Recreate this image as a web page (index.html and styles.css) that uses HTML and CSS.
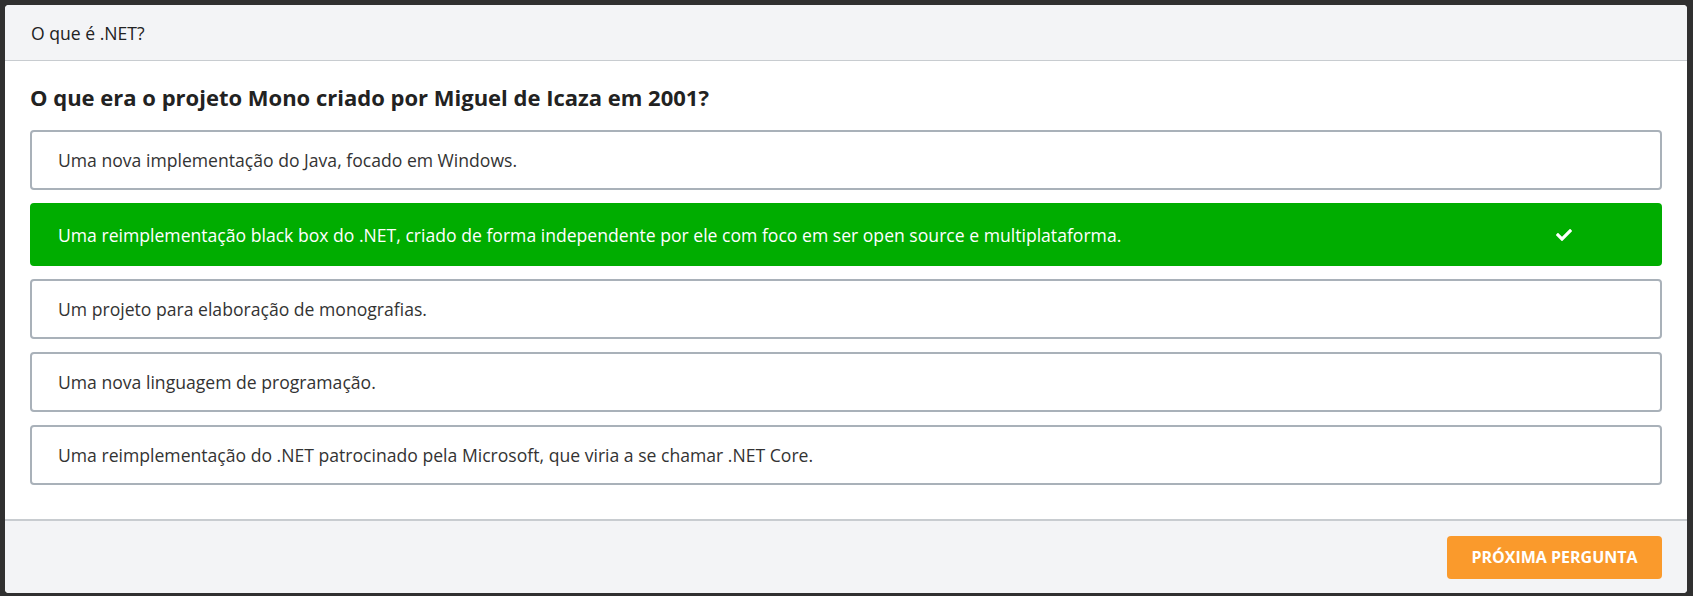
FILE: index.html
```html
<!DOCTYPE html>
<html lang="pt-BR">
<head>
<meta charset="utf-8">
<title>Quiz</title>
<link rel="stylesheet" href="styles.css">
</head>
<body>
<div class="card">
  <div class="card-header">O que é .NET?</div>
  <div class="card-body">
    <h2 class="question">O que era o projeto Mono criado por Miguel de Icaza em 2001?</h2>
    <div class="options">
      <div class="option">Uma nova implementação do Java, focado em Windows.</div>
      <div class="option correct">
        <span class="option-text">Uma reimplementação black box do .NET, criado de forma independente por ele com foco em ser open source e multiplataforma.</span>
        <svg class="check" viewBox="0 0 512 512" width="16" height="16"><path fill="#fff" d="M173.9 439.4L7.5 273c-10-10-10-26.2 0-36.2l36.2-36.2c10-10 26.2-10 36.2 0L192 312.7 432.1 72.6c10-10 26.2-10 36.2 0l36.2 36.2c10 10 10 26.2 0 36.2L210.1 439.4c-10 10-26.2 10-36.2 0z"/></svg>
      </div>
      <div class="option">Um projeto para elaboração de monografias.</div>
      <div class="option">Uma nova linguagem de programação.</div>
      <div class="option">Uma reimplementação do .NET patrocinado pela Microsoft, que viria a se chamar .NET Core.</div>
    </div>
  </div>
  <div class="card-footer">
    <button class="btn-next">PRÓXIMA PERGUNTA</button>
  </div>
</div>
</body>
</html>
```
FILE: styles.css
```css
html, body {
  margin: 0;
  padding: 0;
}
body {
  background: #303030;
  font-family: "Open Sans", "Noto Sans", sans-serif;
  color: #333;
  padding: 5px 6px 3px 5px;
  height: 596px;
  box-sizing: border-box;
}
.card {
  background: #fff;
  border-radius: 4px;
  overflow: hidden;
}
.card-header {
  background: #f3f4f6;
  border-bottom: 1px solid #c8ccd0;
  height: 56px;
  box-sizing: border-box;
  display: flex;
  align-items: center;
  padding: 0 26px;
  font-size: 17.6px;
  color: #222;
}
.card-body {
  padding: 21px 25px 34px 25px;
}
.question {
  margin: 0 0 18px 0;
  font-size: 22px;
  font-weight: 700;
  color: #222;
  line-height: 30px;
}
.options {
  display: flex;
  flex-direction: column;
  gap: 13px;
}
.option {
  height: 60px;
  box-sizing: border-box;
  border: 2px solid #a9b1b9;
  border-radius: 4px;
  display: flex;
  align-items: center;
  padding: 0 26px;
  font-size: 17.6px;
  color: #333;
}
.option.correct {
  background: #00ad00;
  border-color: #00ad00;
  color: #fff;
  height: 63px;
}
.option-text {
  flex: 1;
}
.check {
  margin-right: 62px;
}
.card-footer {
  background: #f3f4f6;
  border-top: 2px solid #c8ccd0;
  height: 74px;
  box-sizing: border-box;
  display: flex;
  justify-content: flex-end;
  align-items: center;
  padding: 0 25px;
}
.btn-next {
  background: #fa9a2c;
  color: #fff;
  border: none;
  border-radius: 4px;
  height: 43px;
  width: 215px;
  font-family: "Open Sans", "Noto Sans", sans-serif;
  font-weight: 700;
  font-size: 16px;
  padding: 0;
}
```
